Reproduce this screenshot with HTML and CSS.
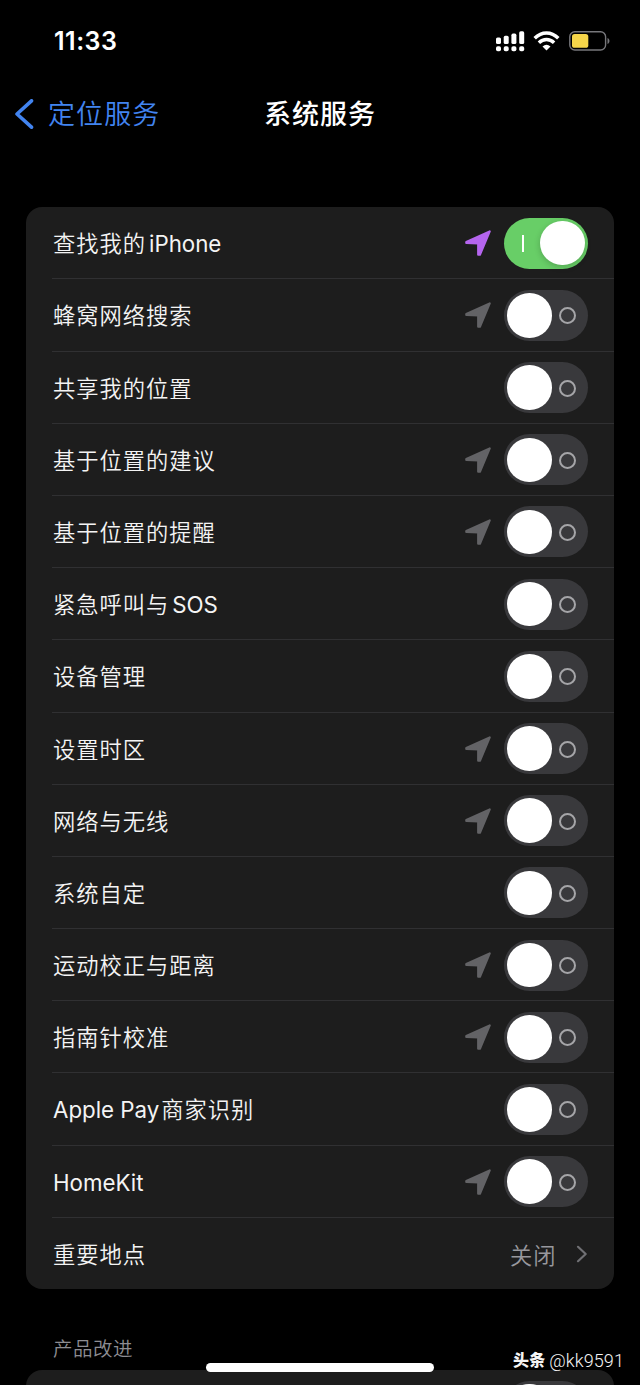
FILE: index.html
```
<!DOCTYPE html>
<html lang="zh-CN">
<head>
<meta charset="utf-8">
<title>系统服务</title>
<link rel="stylesheet" href="styles.css">
</head>
<body>
<svg class="defs" width="0" height="0" aria-hidden="true">
  <symbol id="arrow" viewBox="0 0 26 26"><path d="M1.300 11.900 24.700 1.400 14.900 24.700H13.200V13.300L1.300 12.900Z" fill="currentColor" stroke="currentColor" stroke-width="2.200" stroke-linejoin="round"/></symbol>
</svg>
<div class="screen">
  <header class="status">
    <time class="clock">11:33</time>
    <div class="indicators">
      <svg class="signal" width="29" height="21" viewBox="0 0 29 21" fill="#fff">
        <rect x="0" y="6.5" width="5" height="6.5" rx="1.6"/><rect x="7.7" y="4.8" width="5" height="8.2" rx="1.6"/><rect x="15.4" y="2.6" width="5" height="10.4" rx="1.6"/><rect x="23.2" y="0.3" width="5" height="12.7" rx="1.6"/>
        <rect x="0" y="15.2" width="5" height="5" rx="1.8"/><rect x="7.7" y="15.2" width="5" height="5" rx="1.8"/><rect x="15.4" y="15.2" width="5" height="5" rx="1.8"/><rect x="23.2" y="15.2" width="5" height="5" rx="1.8"/>
      </svg>
      <svg class="wifi" width="27" height="20" viewBox="0 0 27 20" fill="none" stroke="#fff" stroke-width="3.5">
        <path d="M1.7 7.3Q7 2 13.5 2T25.3 7.3"/><path d="M5.9 11.7Q9.2 8.600 13.500 8.600T21.100 11.700"/><path d="M9.500 15.400Q13.500 12 17.500 15.400L13.500 19.400Z" fill="#fff" stroke="none"/>
      </svg>
      <svg class="battery" width="41" height="20" viewBox="0 0 41 20">
        <rect x=".8" y=".8" width="35.8" height="18.2" rx="5" fill="none" stroke="#77777b" stroke-width="1.4"/><rect x="3" y="3" width="16.3" height="13.8" rx="2.6" fill="#f6d64a"/><path d="M38.5 7v6c2.6-1 2.6-5 0-6" fill="#77777b"/>
      </svg>
    </div>
  </header>
  <nav class="navbar">
    <a class="back"><svg width="20" height="32" viewBox="0 0 20 32"><path d="M16.500 1.800 2 15 16.500 28.200" fill="none" stroke="currentColor" stroke-width="3.600" stroke-linecap="round" stroke-linejoin="round"/></svg><span>定位服务</span></a>
    <h1 class="title">系统服务</h1>
  </nav>
  <main>
    <ul class="card">
      <li class="row"><span class="label">查找我的<span class="latin after">iPhone</span></span><svg class="arrow active"><use href="#arrow"/></svg><span class="switch on"><i class="bar"></i><i class="knob"></i></span></li>
      <li class="row"><span class="label">蜂窝网络搜索</span><svg class="arrow"><use href="#arrow"/></svg><span class="switch"><i class="knob"></i><i class="ring"></i></span></li>
      <li class="row"><span class="label">共享我的位置</span><span class="switch"><i class="knob"></i><i class="ring"></i></span></li>
      <li class="row"><span class="label">基于位置的建议</span><svg class="arrow"><use href="#arrow"/></svg><span class="switch"><i class="knob"></i><i class="ring"></i></span></li>
      <li class="row"><span class="label">基于位置的提醒</span><svg class="arrow"><use href="#arrow"/></svg><span class="switch"><i class="knob"></i><i class="ring"></i></span></li>
      <li class="row"><span class="label">紧急呼叫与<span class="latin after">SOS</span></span><span class="switch"><i class="knob"></i><i class="ring"></i></span></li>
      <li class="row"><span class="label">设备管理</span><span class="switch"><i class="knob"></i><i class="ring"></i></span></li>
      <li class="row"><span class="label">设置时区</span><svg class="arrow"><use href="#arrow"/></svg><span class="switch"><i class="knob"></i><i class="ring"></i></span></li>
      <li class="row"><span class="label">网络与无线</span><svg class="arrow"><use href="#arrow"/></svg><span class="switch"><i class="knob"></i><i class="ring"></i></span></li>
      <li class="row"><span class="label">系统自定</span><span class="switch"><i class="knob"></i><i class="ring"></i></span></li>
      <li class="row"><span class="label">运动校正与距离</span><svg class="arrow"><use href="#arrow"/></svg><span class="switch"><i class="knob"></i><i class="ring"></i></span></li>
      <li class="row"><span class="label">指南针校准</span><svg class="arrow"><use href="#arrow"/></svg><span class="switch"><i class="knob"></i><i class="ring"></i></span></li>
      <li class="row"><span class="label"><span class="latin before">Apple Pay</span>商家识别</span><span class="switch"><i class="knob"></i><i class="ring"></i></span></li>
      <li class="row"><span class="label"><span class="latin">HomeKit</span></span><svg class="arrow"><use href="#arrow"/></svg><span class="switch"><i class="knob"></i><i class="ring"></i></span></li>
      <li class="row"><span class="label">重要地点</span><span class="value">关闭</span><svg class="chevron" width="12" height="18" viewBox="0 0 12 18"><path d="M2 1.800 9.700 9 2 16.200" fill="none" stroke="#707074" stroke-width="2.200" stroke-linecap="round" stroke-linejoin="round"/></svg></li>
    </ul>
    <h2 class="section">产品改进</h2>
    <ul class="card next">
      <li class="row"><span class="label"></span><span class="switch"><i class="knob"></i><i class="ring"></i></span></li>
    </ul>
  </main>
  <div class="home"></div>
  <div class="credit"><b>头条</b><span>@kk9591</span></div>
</div>
</body>
</html>
```
FILE: styles.css
```
* { box-sizing: border-box; margin: 0; padding: 0; }
html, body { background: #000; }
body { font-family: Inter, "Noto Sans CJK SC", sans-serif; color: #f4f4f4; }
.defs { display: block; }
.screen { position: relative; width: 640px; height: 1385px; overflow: hidden; background: #000; }

.status { display: flex; justify-content: space-between; height: 82px; padding: 0 30px 0 54px; align-items: center; }
.clock { font-size: 25px; font-weight: 600; letter-spacing: .5px; color: #fff; }
.indicators { display: flex; align-items: center; }
.wifi { margin-left: 8px; }
.battery { margin-left: 9px; }

.navbar { display: grid; grid-template-columns: 1fr auto 1fr; align-items: center; height: 64px; padding: 1px 15px 0; }
.back { display: flex; align-items: center; gap: 13px; color: #4284f0; font-size: 27px; letter-spacing: 1.100px; line-height: 40px; }
.back span { font-weight: 350; }
.title { font-size: 27px; font-weight: 500; line-height: 40px; letter-spacing: 1px; color: #fff; }

main { padding: 61px 26px 0; }
.card { list-style: none; width: 587.500px; border-radius: 16px; background: #1d1d1d; overflow: hidden; }
.row { display: flex; align-items: center; height: 72.200px; margin-left: 26px; padding: .8px 26px 0 0; }
.row:first-child { height: 71.400px; padding-top: 1px; }
.row + .row { border-top: 1px solid #303032; }
.label { flex: 1; padding: 2px 0 0 1px; font-size: 22.300px; letter-spacing: .95px; line-height: 34px; white-space: nowrap; font-weight: 350; }
.latin { font-size: 22.300px; letter-spacing: 0; font-weight: 400; }
.after { margin-left: 3px; }
.before { margin-right: 2px; }
.arrow { width: 26px; height: 26px; margin-right: 13px; color: #636366; }
.arrow.active { color: #b565ee; }
.switch { display: flex; align-items: center; width: 83.500px; height: 51px; padding: 0 3px; border-radius: 26px; background: #39393c; }
.knob { width: 44.500px; height: 44.500px; border-radius: 50%; background: #fff; }
.ring { width: 17px; height: 17px; margin: 1px 0 0 7.500px; border: 2px solid #a5a5a8; border-radius: 50%; }
.switch.on { justify-content: space-between; background: #68ce67; }
.bar { width: 2px; height: 17px; margin-left: 15px; background: #fff; }
.on .knob { box-shadow: 0 2px 6px #0003; }
.value { margin-right: 19px; font-size: 22.300px; font-weight: 350; letter-spacing: .95px; color: #98989d; }
.section { margin: 47px 0 0 27px; height: 34px; line-height: 27px; font-size: 19.500px; font-weight: 350; letter-spacing: .5px; color: #8d8d92; }

.home { position: absolute; left: 206px; top: 1363px; width: 228px; height: 9px; border-radius: 5px; background: #fff; }
.credit { position: absolute; right: 16px; top: 1350px; display: flex; align-items: center; gap: 4px; height: 22px; color: #f4f4f4; font: 300 18px/22px Roboto, "Noto Sans CJK SC", sans-serif; letter-spacing: .1px; }
.credit b { font-size: 16px; font-weight: 900; }
```
